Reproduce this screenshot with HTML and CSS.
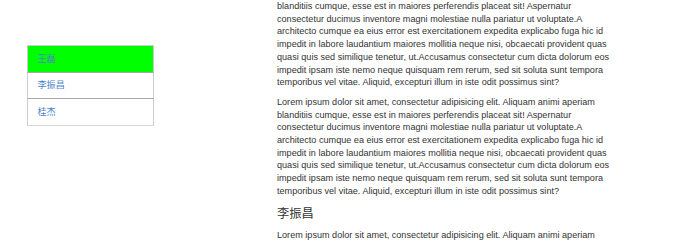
FILE: index.html
```html
<!DOCTYPE html>
<html lang="zh-CN">
<head>
  <meta charset="UTF-8" />
  <meta name="viewport" content="width=device-width, initial-scale=1.0" />
  <title>Scrollspy</title>
  <link rel="stylesheet" href="styles.css">
</head>
<body>
  <div class="sidebar">
    <ul class="nav-list">
      <li class="nav-item active"><a href="#wanglei">王磊</a></li>
      <li class="nav-item"><a href="#lizhenchang">李振昌</a></li>
      <li class="nav-item"><a href="#guijie">桂杰</a></li>
    </ul>
  </div>

  <div class="content">
    <p>blanditiis cumque, esse est in maiores perferendis placeat sit! Aspernatur consectetur ducimus inventore magni molestiae nulla pariatur ut voluptate.A architecto cumque ea eius error est exercitationem expedita explicabo fuga hic id impedit in labore laudantium maiores mollitia neque nisi, obcaecati provident quas quasi quis sed similique tenetur, ut.Accusamus consectetur cum dicta dolorum eos impedit ipsam iste nemo neque quisquam rem rerum, sed sit soluta sunt tempora temporibus vel vitae. Aliquid, excepturi illum in iste odit possimus sint?</p>
    <p>Lorem ipsum dolor sit amet, consectetur adipisicing elit. Aliquam animi aperiam blanditiis cumque, esse est in maiores perferendis placeat sit! Aspernatur consectetur ducimus inventore magni molestiae nulla pariatur ut voluptate.A architecto cumque ea eius error est exercitationem expedita explicabo fuga hic id impedit in labore laudantium maiores mollitia neque nisi, obcaecati provident quas quasi quis sed similique tenetur, ut.Accusamus consectetur cum dicta dolorum eos impedit ipsam iste nemo neque quisquam rem rerum, sed sit soluta sunt tempora temporibus vel vitae. Aliquid, excepturi illum in iste odit possimus sint?</p>

    <h4 id="lizhenchang">李振昌</h4>
    <p>Lorem ipsum dolor sit amet, consectetur adipisicing elit. Aliquam animi aperiam</p>
  </div>
</body>
</html>
```

FILE: styles.css
```css
html, body {
  overflow: hidden;
}
body {
  margin: 0;
  display: flex;
  align-items: flex-start;
  font-family: "Liberation Sans", Arial, "Noto Sans CJK SC", sans-serif;
  font-size: 9.1px;
  line-height: 12.7px;
  color: #333;
}
.sidebar {
  box-sizing: border-box;
  width: 277px;
  padding: 45px 0 0 27px;
}
.nav-list {
  list-style: none;
  margin: 0;
  padding: 0;
  width: 127px;
}
.nav-item {
  border: 1px solid #ccc;
  margin-bottom: -1px;
}
.nav-item + .nav-item {
  border-top-color: #a8a8a8;
}
.nav-item:last-child {
  border-bottom-color: #d8d8d8;
}
.nav-item a {
  display: block;
  padding: 6.5px 9.5px;
  color: #4a86c5;
  text-decoration: none;
}
.nav-item.active {
  background: #00ff00;
}
.content {
  width: 334px;
}
.content p {
  margin: 0 0 7px;
}
.content h4 {
  margin: 9.6px 0 8px;
  font-size: 12.3px;
  line-height: 14px;
  font-weight: normal;
  color: #333;
}
```
